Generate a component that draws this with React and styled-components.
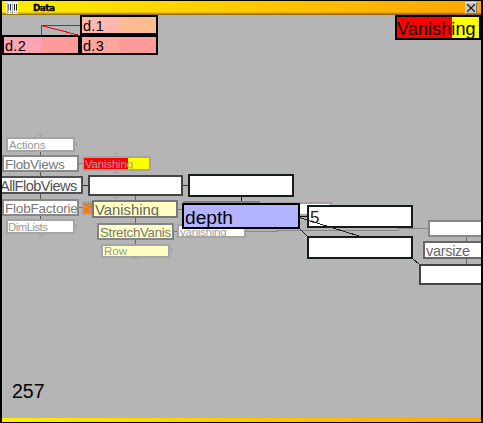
import React from "react";
import styled, { createGlobalStyle } from "styled-components";

const Global = createGlobalStyle`
  * { box-sizing: border-box; }
  body { margin: 0; background: #000; font-family: "Liberation Sans", Arial, sans-serif; }
`;

const Window = styled.main`
  width: 483px;
  height: 423px;
  padding: 1px 2px;
  background: #000;
  display: flex;
  flex-direction: column;
  overflow: hidden;
`;

const TitleBar = styled.header`
  height: 14px;
  flex: none;
  display: flex;
  align-items: center;
  justify-content: space-between;
  padding: 0 4px;
  background:
    linear-gradient(to bottom, transparent 11px, rgba(120, 70, 0, 0.3) 12px, rgba(90, 50, 0, 0.75) 14px),
    linear-gradient(to right, #ffee00, #ffa500);
`;

const TitleGroup = styled.div`
  display: flex;
  align-items: center;
  gap: 15px;
`;

const Title = styled.h1`
  margin: 0;
  font: 900 9px/13px "DejaVu Sans", sans-serif;
  letter-spacing: -0.6px;
  -webkit-text-stroke: 0.3px #000;
`;

const CloseButton = styled.button`
  width: 12px;
  height: 12px;
  padding: 0;
  border: 1px solid;
  border-color: #e4e4e4 #777 #777 #e4e4e4;
  background: #c6c6c6;
  display: flex;
  align-items: center;
  justify-content: center;
`;

const Canvas = styled.section`
  position: relative;
  flex: 1;
  overflow: hidden;
  background: #b5b5b5;
`;

const BottomEdge = styled.footer`
  height: 4px;
  flex: none;
  background: linear-gradient(to right, #ffee00, #ffa500);
`;

const Links = styled.svg`
  position: absolute;
  left: -2px;
  top: -15px;
`;

const Node = styled.div`
  position: absolute;
  left: ${(p) => p.$x - 2}px;
  top: ${(p) => p.$y - 15}px;
  width: ${(p) => p.$w}px;
  height: ${(p) => p.$h}px;
  border: 2px solid ${(p) => p.$line};
  background: ${(p) => p.$fill || "#fff"};
  overflow: hidden;
  display: flex;
  align-items: center;
`;

const Label = styled.span`
  flex: none;
  white-space: pre;
  color: ${(p) => p.$ink};
  font-size: ${(p) => p.$size}px;
  line-height: 1;
  margin-left: ${(p) => p.$inset ?? 1}px;
  padding-top: ${(p) => p.$drop ?? 2}px;
  letter-spacing: ${(p) => p.$track || 0}px;
`;

const Counter = styled.output`
  position: absolute;
  left: 10px;
  top: 365px;
  font-size: 19.5px;
  line-height: 22px;
  color: #000;
`;

const split = (a, b, at) => `linear-gradient(to right, ${a} ${at}px, ${b} ${at}px)`;

const nodes = [
  { x: 6, y: 137, w: 69, h: 15, line: "#a5a5a5", text: "Actions", ink: "#999", size: 11.5, track: -0.2 },
  { x: 6, y: 219, w: 69, h: 15, line: "#a5a5a5", text: "DimLists", ink: "#999", size: 11.5, inset: 0, track: -0.6 },
  { x: 2, y: 155, w: 77, h: 17, line: "#888", text: "FlobViews", ink: "#777", size: 13.5, track: -0.3 },
  { x: 2, y: 199, w: 77, h: 17, line: "#888", text: "FlobFactorie", ink: "#777", size: 13.5, track: -0.2 },
  { x: -2, y: 176, w: 85, h: 18, line: "#505050", text: "AllFlobViews", ink: "#505050", size: 14.5, track: -0.5, inset: 0 },
  { x: 82, y: 156, w: 69, h: 15, line: "#a5a5a5", fill: split("#f00", "#ff0", 44), text: "Vanishing", ink: "#a0a0a0", size: 11.5, track: -0.2 },
  { x: 82, y: 201, w: 69, h: 14, line: "#a5a5a5", fill: "#ff7300", text: "S", ink: "#a0a0a0", size: 11.5 },
  { x: 262, y: 202, w: 70, h: 14, line: "#a5a0a8" },
  { x: 183, y: 201, w: 77, h: 17, line: "#808080" },
  { x: 177, y: 224, w: 69, h: 14, line: "#a5a5a5", text: "vanishing", ink: "#a0a0a0", size: 11.5, drop: 3, track: -0.25 },
  { x: 88, y: 175, w: 95, h: 21, line: "#444" },
  { x: 188, y: 174, w: 106, h: 23, line: "#151a1a" },
  { x: 92, y: 200, w: 86, h: 18, line: "#777", fill: "#ffffc4", text: "Vanishing", ink: "#666", size: 14.8, drop: 3 },
  { x: 97, y: 223, w: 77, h: 17, line: "#858585", fill: "#ffffc4", text: "StretchVanis", ink: "#777", size: 13.2, drop: 3, track: -0.25 },
  { x: 101, y: 244, w: 69, h: 14, line: "#a5a5a5", fill: "#ffffc4", text: "Row", ink: "#999", size: 11.5 },
  { x: 182, y: 203, w: 118, h: 26, line: "#000", fill: "#b3b3ff", text: "depth", ink: "#000", size: 19.2, drop: 3 },
  { x: 307, y: 205, w: 106, h: 23, line: "#151a1a", text: "5", ink: "#222", size: 17 },
  { x: 307, y: 236, w: 106, h: 23, line: "#151a1a" },
  { x: 428, y: 220, w: 77, h: 17, line: "#888" },
  { x: 423, y: 241, w: 86, h: 18, line: "#666", text: "varsize", ink: "#666", size: 14.5, drop: 3, track: -0.3 },
  { x: 419, y: 264, w: 95, h: 21, line: "#444" },
  { x: 80, y: 15, w: 78, h: 20, line: "#000", fill: split("#ffb7ae", "#ffbb91", 37), text: "d.1", ink: "#000", size: 14.5, track: 0.3 },
  { x: 2, y: 35, w: 78, h: 20, line: "#000", fill: split("#ffa4b3", "#ff9a9a", 37), text: "d.2", ink: "#000", size: 14.5, track: 0.3 },
  { x: 80, y: 35, w: 78, h: 20, line: "#000", fill: split("#ffa69c", "#ff9a9a", 37), text: "d.3", ink: "#000", size: 14.5, track: 0.3 },
  { x: 395, y: 15, w: 86, h: 25, line: "#000", fill: split("#f00", "#ff0", 55), text: "Vanishing", ink: "#000", size: 18, inset: 0, track: 0.1, drop: 3 },
];

function DataIcon() {
  return (
    <svg width="12" height="12" shapeRendering="crispEdges">
      <rect width="12" height="12" fill="#f4f4f4" />
      <path d="M1.5 1v11M6.5 1v11" stroke="#aaa" />
      <path d="M4.5 2v6M8.5 2v6M10.5 2v6" stroke="#222" />
      <path d="M2.5 2v6" stroke="#777" />
      <path d="M2.5 8v4M4.5 8v4M8.5 8v4M10.5 8v4" stroke="#999" strokeDasharray="1 1" />
    </svg>
  );
}

export default function App() {
  return (
    <>
      <Global />
      <Window>
        <TitleBar>
          <TitleGroup>
            <DataIcon />
            <Title>Data</Title>
          </TitleGroup>
          <CloseButton aria-label="Close">
            <svg width="8" height="8">
              <path d="M0 0L8 8M8 0L0 8" stroke="#222" strokeWidth="1.3" />
            </svg>
          </CloseButton>
        </TitleBar>
        <Canvas>
          <Links width="483" height="423" fill="none" shapeRendering="crispEdges">
            <path d="M40.5 145V225" stroke="#555" />
            <path d="M38 134.5h5M38 235.5h5M40.5 134v3M40.5 233v3M75 144.5h2M75 226.5h2M76.5 142v5M76.5 224v5" stroke="#a0a0a0" />
            <path d="M114 153.5h5M116.5 153v3M114 172.5h5M116.5 170v3M114 197.5h5M116.5 197v3M133 258.5h5M171.5 248v5" stroke="#a0a0a0" />
            <path d="M79 163.5h4M79 207.5h4M178 209.5h5M173 231.5h5" stroke="#777" />
            <path d="M82 185.5h7M183 185.5h6" stroke="#333" />
            <path d="M135.5 196v48" stroke="#666" />
            <path d="M241.5 196v8" stroke="#111" />
            <path d="M246 231.5h31V230.5H398V228.5h31" stroke="#888" />
            <path d="M466.5 236v6M466.5 258v7" stroke="#666" />
            <path d="M299 228l9 9M412 258l8 7" stroke="#222" />
          </Links>
          {nodes.map((n, i) => (
            <Node key={i} $x={n.x} $y={n.y} $w={n.w} $h={n.h} $line={n.line} $fill={n.fill}>
              {n.text && (
                <Label $ink={n.ink} $size={n.size} $track={n.track} $inset={n.inset} $drop={n.drop}>
                  {n.text}
                </Label>
              )}
            </Node>
          ))}
          <Links width="483" height="423" fill="none" shapeRendering="crispEdges">
            <path d="M41.5 35V25.5H80M41.5 25.5L80 35.5" stroke="#f00" />
            <path d="M299 216.5h9" stroke="#111" />
            <path d="M299 217.5L359 236" stroke="#222" />
          </Links>
          <Counter>257</Counter>
        </Canvas>
        <BottomEdge />
      </Window>
    </>
  );
}
